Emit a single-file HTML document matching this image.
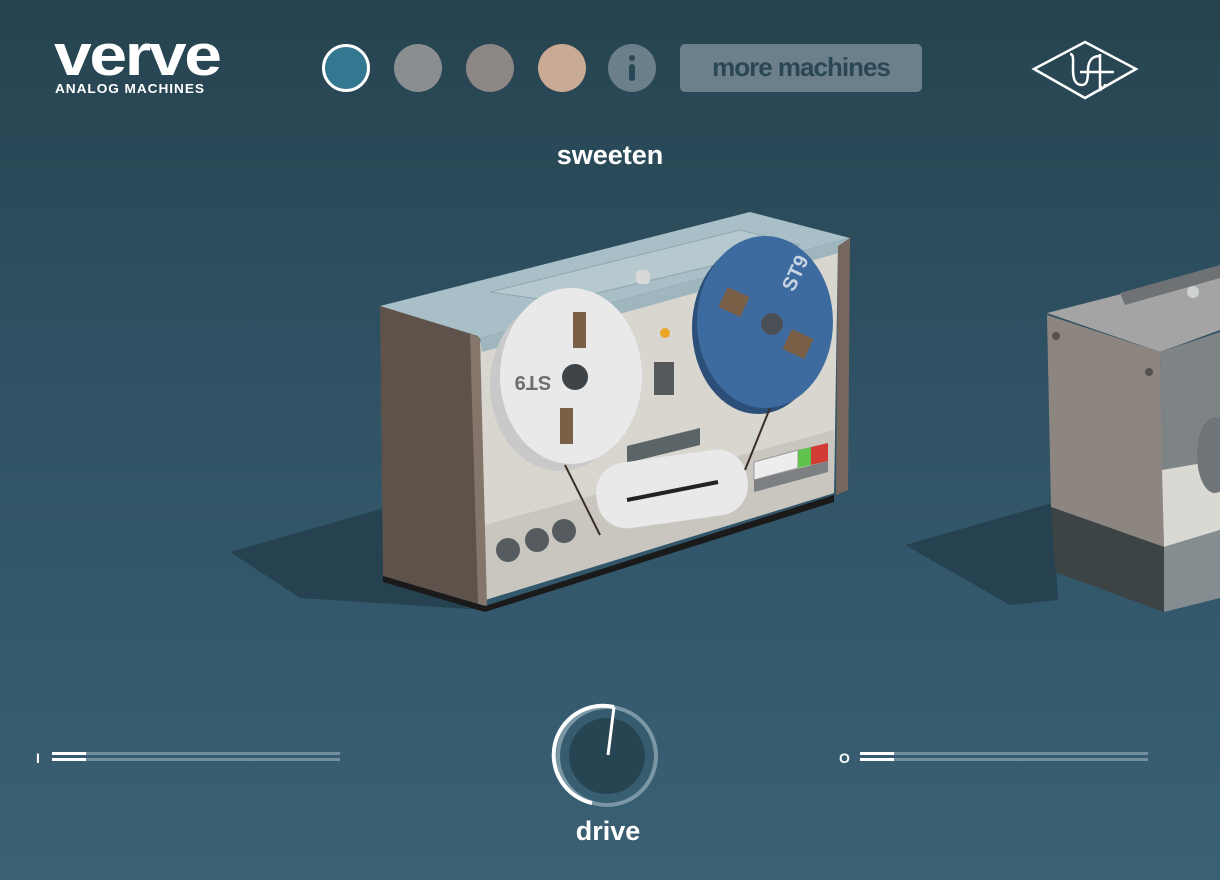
<!DOCTYPE html>
<html><head><meta charset="utf-8"><style>
html,body{margin:0;padding:0}
body{width:1220px;height:880px;overflow:hidden;position:relative;background:linear-gradient(180deg,#27434f 0%,#2e5163 40%,#3a6074 100%);font-family:"Liberation Sans",sans-serif}
.t{position:absolute;color:#fff;font-weight:bold}
.dot{position:absolute;top:44px;width:48px;height:48px;border-radius:50%}
</style></head><body>
<div class="t" style="left:54px;top:28px;font-size:58px;letter-spacing:-2px;line-height:56px;transform:scaleX(1.17);transform-origin:left top">verve</div>
<div class="t" style="left:55px;top:81px;font-size:13px;letter-spacing:0.9px;transform:scaleX(1.05);transform-origin:left top">ANALOG MACHINES</div>
<div class="dot" style="left:322px;background:#347791;border:3px solid #fff;width:42px;height:42px"></div>
<div class="dot" style="left:394px;background:#8a8e91"></div>
<div class="dot" style="left:466px;background:#8c8684"></div>
<div class="dot" style="left:538px;background:#c9aa94"></div>
<div class="dot" style="left:608px;background:#6b7f8a"><div style="position:absolute;left:21px;top:11px;width:6px;height:6px;border-radius:50%;background:#2b4756"></div><div style="position:absolute;left:21px;top:20px;width:6px;height:17px;border-radius:3px;background:#2b4756"></div></div>
<div style="position:absolute;left:680px;top:44px;width:242px;height:48px;border-radius:5px;background:#6c808b;color:#2b4755;font-size:26px;font-weight:bold;text-align:center;line-height:46px;letter-spacing:-1px">more machines</div>
<svg style="position:absolute;left:1030px;top:40px" width="112" height="62" viewBox="0 0 112 62"><polygon points="4,29 55,2 106,29 55,58" fill="none" stroke="#fff" stroke-width="2.5"/><path d="M40,14 C44,14 43,20 43,30 C43,42 47,45 52,45 C57,45 58,40 58,30 C58,20 63,16 70,16 M70,14 L70,50 C72,50 70,45 70,45 M50,32 L84,32 M72,48 C74,48 75,46 75,44" fill="none" stroke="#fff" stroke-width="2.5"/></svg>
<div class="t" style="left:0;width:1220px;text-align:center;top:140px;font-size:27px">sweeten</div>

<svg style="position:absolute;left:0;top:0" width="1220" height="880">
<polygon points="230,552 385,508 485,610 300,598" fill="#233d4a" opacity="0.8"/>
<polygon points="905,545 1052,503 1058,600 1010,605" fill="#233d4a" opacity="0.8"/>
<polygon points="380,306 750,212 850,238 480,338" fill="#a8bfc7"/>
<polygon points="490,292 740,230 800,245 560,302" fill="#b5c9cf" stroke="#8ea6ae"/>
<rect x="636" y="270" width="14" height="14" rx="4" fill="#d8d8d8"/>
<polygon points="480,342 838,248 834,493 485,600" fill="#d9d5cf"/>
<polygon points="484,525 834,430 834,493 485,600" fill="#c9c5bf"/>
<polygon points="480,338 850,238 850,250 482,352" fill="#9fb6be"/>
<polygon points="380,306 478,336 485,606 383,576" fill="#5f524b"/>
<polygon points="470,333 480,338 487,606 478,604" fill="#85766b"/>
<polygon points="838,246 850,238 848,490 836,495" fill="#75675e"/>
<polygon points="383,576 485,606 834,495 834,502 485,612 383,582" fill="#1a1a1a"/>
<circle cx="508" cy="550" r="12" fill="#555b5f"/><circle cx="537" cy="540" r="12" fill="#555b5f"/><circle cx="564" cy="531" r="12" fill="#555b5f"/>
<ellipse cx="560" cy="385" rx="70" ry="86" fill="#c9c9c9"/>
<ellipse cx="571" cy="376" rx="71" ry="88" fill="#e9e9ea"/>
<rect x="573" y="312" width="13" height="36" fill="#7a6047"/>
<rect x="560" y="408" width="13" height="36" fill="#7a6047"/>
<circle cx="575" cy="377" r="13" fill="#3e4448"/>
<text x="533" y="390" font-size="20" font-weight="bold" fill="#6c6e72" text-anchor="middle" transform="rotate(180 533 383)">ST9</text>
<ellipse cx="758" cy="328" rx="66" ry="86" fill="#2b4f78"/>
<ellipse cx="765" cy="322" rx="68" ry="86" fill="#3d6ba0"/>
<rect x="722" y="291" width="24" height="22" fill="#7a6047" transform="rotate(25 734 302)"/>
<rect x="786" y="333" width="24" height="22" fill="#7a6047" transform="rotate(25 798 344)"/>
<circle cx="772" cy="324" r="11" fill="#4a5055"/>
<text x="795" y="280" font-size="20" font-weight="bold" fill="#c8d4e2" text-anchor="middle" transform="rotate(-65 795 273)">ST9</text>
<circle cx="665" cy="333" r="5" fill="#e8a526"/>
<rect x="654" y="362" width="20" height="33" fill="#56595b"/>
<polygon points="627,446 700,428 700,445 627,463" fill="#5b6466"/>
<rect x="596" y="456" width="152" height="66" rx="30" fill="#e9e9e9" transform="rotate(-8 672 489)"/>
<line x1="627" y1="500" x2="718" y2="482" stroke="#222" stroke-width="4"/>
<line x1="565" y1="465" x2="600" y2="535" stroke="#3a2e26" stroke-width="2"/>
<line x1="770" y1="408" x2="745" y2="470" stroke="#3a2e26" stroke-width="2"/>
<polygon points="754,462 798,450 798,468 754,480" fill="#ededed" stroke="#999"/>
<polygon points="798,450 811,447 811,465 798,468" fill="#5fc24c"/>
<polygon points="811,447 828,443 828,461 811,465" fill="#d23a34"/>
<polygon points="754,480 828,461 828,472 754,492" fill="#7d8083"/>
<polygon points="1047,313 1125,293 1220,268 1220,330 1160,352" fill="#a4a4a4"/>
<polygon points="1120,293 1220,265 1220,278 1125,305" fill="#6f7274"/>
<circle cx="1193" cy="292" r="6" fill="#cfd2d3"/>
<polygon points="1047,315 1160,352 1164,547 1051,507" fill="#8c8580"/>
<polygon points="1051,507 1164,547 1164,612 1055,572" fill="#3c4446"/>
<polygon points="1160,352 1220,332 1220,465 1162,472" fill="#7e8386"/>
<polygon points="1162,470 1220,460 1220,530 1164,547" fill="#dad8d3"/>
<polygon points="1164,547 1220,530 1220,598 1164,612" fill="#868d90"/>
<ellipse cx="1215" cy="455" rx="18" ry="38" fill="#6e7478"/>
<circle cx="1056" cy="336" r="4" fill="#55514e"/><circle cx="1149" cy="372" r="4" fill="#55514e"/>
<text x="36" y="763" font-size="14" font-weight="bold" fill="#fff">I</text>
<rect x="52" y="752" width="288" height="3" fill="#738e9c"/><rect x="52" y="758" width="288" height="3" fill="#738e9c"/>
<rect x="52" y="752" width="34" height="3" fill="#fff"/><rect x="52" y="758" width="34" height="3" fill="#fff"/>
<text x="839" y="763" font-size="14" font-weight="bold" fill="#fff">O</text>
<rect x="860" y="752" width="288" height="3" fill="#738e9c"/><rect x="860" y="758" width="288" height="3" fill="#738e9c"/>
<rect x="860" y="752" width="34" height="3" fill="#fff"/><rect x="860" y="758" width="34" height="3" fill="#fff"/>
<circle cx="607" cy="756" r="49" fill="none" stroke="#7b97a5" stroke-width="4"/>
<path d="M614,707 A49,49 0 1 0 592,803" fill="none" stroke="#fff" stroke-width="4"/>
<circle cx="607" cy="756" r="38" fill="#264452"/>
<line x1="608" y1="755" x2="614" y2="707" stroke="#fff" stroke-width="3"/>
</svg>
<div class="t" style="left:548px;width:120px;text-align:center;top:816px;font-size:27px">drive</div>
</body></html>
